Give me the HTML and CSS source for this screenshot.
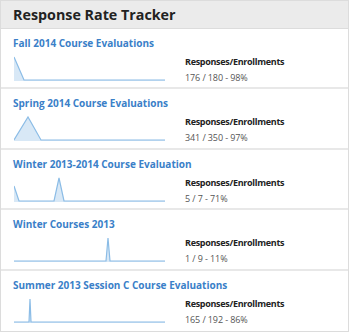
FILE: index.html
```html
<!DOCTYPE html>
<html lang="en">
<head>
    <meta charset="UTF-8">
    <title>Response Rate Tracker</title>
    <link rel="stylesheet" href="styles.css">
</head>
<body>
    <div class="tracker">
        <div class="tracker-header">Response Rate Tracker</div>

        <div class="survey">
            <a class="survey-title" href="#">Fall 2014 Course Evaluations</a>
            <div class="survey-body">
                <svg class="spark" width="151" height="25" viewBox="0 0 151 25">
                    <polygon class="spark-fill" points="0,1 10,24 151,24 151,25 0,25"/>
                    <polyline class="spark-line" points="0,1 10,24 151,24"/>
                </svg>
                <div class="survey-info">
                    <div class="info-label">Responses/Enrollments</div>
                    <div class="info-value">176 / 180 - 98%</div>
                </div>
            </div>
        </div>

        <div class="survey">
            <a class="survey-title" href="#">Spring 2014 Course Evaluations</a>
            <div class="survey-body">
                <svg class="spark" width="151" height="25" viewBox="0 0 151 25">
                    <polygon class="spark-fill" points="0,24 14,1 27,24 151,24 151,25 0,25"/>
                    <polyline class="spark-line" points="0,24 14,1 27,24 151,24"/>
                </svg>
                <div class="survey-info">
                    <div class="info-label">Responses/Enrollments</div>
                    <div class="info-value">341 / 350 - 97%</div>
                </div>
            </div>
        </div>

        <div class="survey">
            <a class="survey-title" href="#">Winter 2013-2014 Course Evaluation</a>
            <div class="survey-body">
                <svg class="spark" width="151" height="25" viewBox="0 0 151 25">
                    <polygon class="spark-fill" points="0,9 5,24 40,24 45,1 50,24 151,24 151,25 0,25"/>
                    <polyline class="spark-line" points="0,9 5,24 40,24 45,1 50,24 151,24"/>
                </svg>
                <div class="survey-info">
                    <div class="info-label">Responses/Enrollments</div>
                    <div class="info-value">5 / 7 - 71%</div>
                </div>
            </div>
        </div>

        <div class="survey">
            <a class="survey-title" href="#">Winter Courses 2013</a>
            <div class="survey-body">
                <svg class="spark" width="151" height="25" viewBox="0 0 151 25">
                    <polygon class="spark-fill" points="0,24 92,24 94,1 96,24 151,24 151,25 0,25"/>
                    <polyline class="spark-line" points="0,24 92,24 94,1 96,24 151,24"/>
                </svg>
                <div class="survey-info">
                    <div class="info-label">Responses/Enrollments</div>
                    <div class="info-value">1 / 9 - 11%</div>
                </div>
            </div>
        </div>

        <div class="survey">
            <a class="survey-title" href="#">Summer 2013 Session C Course Evaluations</a>
            <div class="survey-body">
                <svg class="spark" width="151" height="25" viewBox="0 0 151 25">
                    <polygon class="spark-fill" points="0,24 15,24 16,1 17,24 151,24 151,25 0,25"/>
                    <polyline class="spark-line" points="0,24 15,24 16,1 17,24 151,24"/>
                </svg>
                <div class="survey-info">
                    <div class="info-label">Responses/Enrollments</div>
                    <div class="info-value">165 / 192 - 86%</div>
                </div>
            </div>
        </div>
    </div>
</body>
</html>
```

FILE: styles.css
```css
body {
    margin: 0;
    font-family: "Open Sans", "Noto Sans", sans-serif;
    background: #fff;
    color: #333;
}

.tracker {
    width: 347px;
    border: 1px solid #dcdcdc;
    border-top: none;
}

.tracker-header {
    height: 29px;
    line-height: 28px;
    padding: 0 12px;
    background: #ebebeb;
    border-top: 1px solid #dcdcdc;
    border-bottom: 1px solid #dcdcdc;
    font-size: 14.3px;
    font-weight: 700;
    color: #222;
    box-sizing: border-box;
}

.survey {
    height: 60.4px;
    padding: 6px 12px 0;
    border-bottom: 2px solid #e8e8e8;
    box-sizing: border-box;
}

.survey:last-child {
    border-bottom: none;
}

.survey-title {
    display: block;
    font-size: 10px;
    line-height: 16px;
    font-weight: 700;
    color: #3a80c8;
    text-decoration: none;
}

.survey-body {
    display: flex;
    align-items: flex-end;
    margin-top: 3px;
}

.spark {
    display: block;
    margin-left: 1px;
}

.spark-fill {
    fill: #d8e8f6;
}

.spark-line {
    fill: none;
    stroke: #8bbce6;
    stroke-width: 1.2;
}

.survey-info {
    margin-left: 20px;
    margin-bottom: -5px;
}

.info-label {
    font-size: 9px;
    font-weight: 700;
    line-height: 16px;
    letter-spacing: -0.3px;
    color: #222;
}

.info-value {
    font-size: 9px;
    line-height: 16px;
    letter-spacing: -0.1px;
    color: #555;
}
```
